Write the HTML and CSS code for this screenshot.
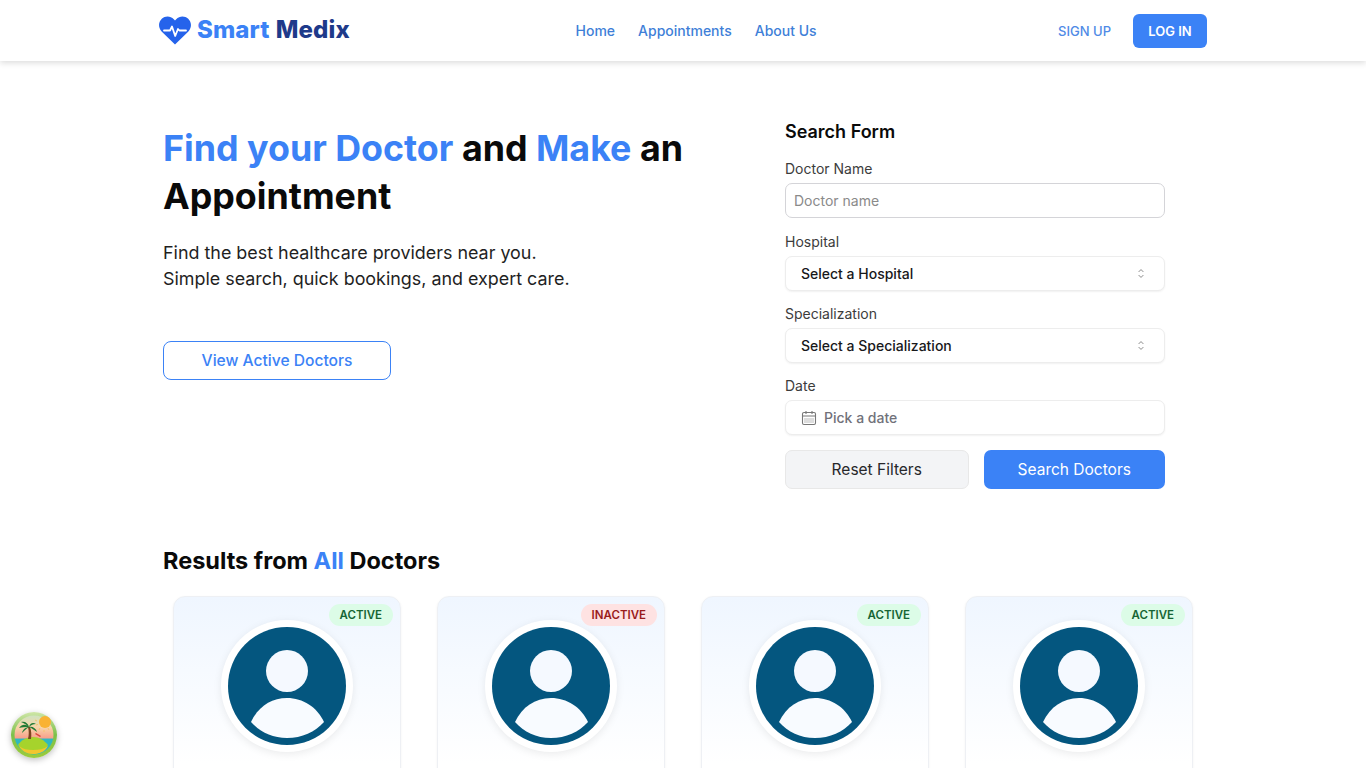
FILE: index.html
```html
<!DOCTYPE html>
<html lang="en">
<head>
  <meta charset="UTF-8" />
  <meta name="viewport" content="width=device-width, initial-scale=1" />
  <title>Smart Medix</title>
  <link rel="stylesheet" href="styles.css">
</head>
<body>
  <header class="topbar">
    <div class="topbar-inner">
      <a class="logo" href="#">
        <svg class="logo-icon" viewBox="0 0 32 29" width="32" height="29">
          <path d="M16 28.5 2.6 15.4C-.9 11.8-.8 6 2.8 2.7 6.3-.5 11.6-.2 14.8 3.2L16 4.6l1.2-1.4c3.2-3.4 8.5-3.7 12-.5 3.6 3.3 3.7 9.1.2 12.7z" fill="#2563eb"/>
          <path d="M5 14.5h6l2-4 3.2 9.5 2.8-7 1.4 1.5H27" fill="none" stroke="#fff" stroke-width="1.8" stroke-linejoin="round" stroke-linecap="round"/>
        </svg>
        <span class="logo-text"><span class="blue">Smart</span> <span class="navy">Medix</span></span>
      </a>
      <nav class="main-nav">
        <a href="#">Home</a>
        <a href="#">Appointments</a>
        <a href="#">About Us</a>
      </nav>
      <div class="auth">
        <a class="signup" href="#">SIGN UP</a>
        <a class="login" href="#">LOG IN</a>
      </div>
    </div>
  </header>

  <main class="page">
    <section class="hero">
      <div class="hero-copy">
        <h1><span class="blue">Find your Doctor</span> <span>and</span> <span class="blue">Make</span> <span>an</span><br><span>Appointment</span></h1>
        <p>Find the best healthcare providers near you.<br>Simple search, quick bookings, and expert care.</p>
        <a class="outline-btn" href="#">View Active Doctors</a>
      </div>

      <form class="search-form">
        <h2>Search Form</h2>
        <label class="field-label" for="doctorName">Doctor Name</label>
        <input class="text-input" id="doctorName" type="text" placeholder="Doctor name">

        <label class="field-label">Hospital</label>
        <div class="select-box">
          <span>Select a Hospital</span>
          <svg viewBox="0 0 10 14" width="8" height="11"><path d="M2 5l3-3 3 3M2 9l3 3 3-3" fill="none" stroke="#777" stroke-width="1.1"/></svg>
        </div>

        <label class="field-label">Specialization</label>
        <div class="select-box">
          <span>Select a Specialization</span>
          <svg viewBox="0 0 10 14" width="8" height="11"><path d="M2 5l3-3 3 3M2 9l3 3 3-3" fill="none" stroke="#777" stroke-width="1.1"/></svg>
        </div>

        <label class="field-label">Date</label>
        <div class="date-box">
          <svg viewBox="0 0 16 16" width="16" height="16">
            <rect x="1.5" y="2.5" width="13" height="12" rx="1.5" fill="none" stroke="#777" stroke-width="1.1"/>
            <path d="M1.5 6h13M5 1v3M11 1v3" fill="none" stroke="#777" stroke-width="1.1"/>
            <path d="M3 8h10v5H3z" fill="#ddd"/>
          </svg>
          <span>Pick a date</span>
        </div>

        <div class="form-actions">
          <button class="reset-btn" type="button">Reset Filters</button>
          <button class="search-btn" type="button">Search Doctors</button>
        </div>
      </form>
    </section>

    <section class="results">
      <h2>Results from <span class="blue">All</span> Doctors</h2>
      <div class="doctor-grid">
        <article class="doctor-card">
          <span class="badge active">ACTIVE</span>
          <div class="avatar"><svg viewBox="0 0 118 118"><use href="#person"/></svg></div>
        </article>
        <article class="doctor-card">
          <span class="badge inactive">INACTIVE</span>
          <div class="avatar"><svg viewBox="0 0 118 118"><use href="#person"/></svg></div>
        </article>
        <article class="doctor-card">
          <span class="badge active">ACTIVE</span>
          <div class="avatar"><svg viewBox="0 0 118 118"><use href="#person"/></svg></div>
        </article>
        <article class="doctor-card">
          <span class="badge active">ACTIVE</span>
          <div class="avatar"><svg viewBox="0 0 118 118"><use href="#person"/></svg></div>
        </article>
      </div>
    </section>
  </main>

  <svg class="sprite" width="0" height="0">
    <symbol id="person" viewBox="0 0 118 118">
      <circle cx="59" cy="59" r="59" fill="#04567f"/>
      <circle cx="59" cy="44" r="21" fill="#f5f9ff"/>
      <path d="M23 95C30 80 43 71 59 71s30 9 37 24c-9 10-22 16-37 16s-27-6-36-16z" fill="#f8fbff"/>
    </symbol>
  </svg>

  <button class="theme-fab" type="button" aria-label="Theme">
    <svg viewBox="0 0 46 46" width="46" height="46">
      <defs>
        <linearGradient id="ring" x1="0" y1="0" x2="0" y2="1">
          <stop offset="0" stop-color="#cfe6a8"/>
          <stop offset="0.5" stop-color="#7cc04a"/>
          <stop offset="1" stop-color="#9ccc3c"/>
        </linearGradient>
        <linearGradient id="sky" x1="0" y1="0" x2="0" y2="1">
          <stop offset="0" stop-color="#cfe3c0"/>
          <stop offset="0.3" stop-color="#f8d5a8"/>
          <stop offset="0.58" stop-color="#f7a08c"/>
          <stop offset="0.6" stop-color="#2fb8c0"/>
          <stop offset="1" stop-color="#2fb8c0"/>
        </linearGradient>
      </defs>
      <circle cx="23" cy="23" r="23" fill="url(#ring)"/>
      <circle cx="23" cy="23" r="19.5" fill="url(#sky)"/>
      <circle cx="34" cy="10" r="6" fill="#f9b233"/>
      <path d="M24 8l2 1M25 13l2-.5M28 18l1-2M33 20v-2M38 18l-1-2" stroke="#f3c46b" stroke-width="1"/>
      <path d="M7 33c3-5 9-8 15-8s11 3 15 8c-3 6-9 9-15 9S10 39 7 33z" fill="#a6d32c"/>
      <path d="M8 34c3 5 8 8 14 8s12-2 15-8c-4 3-9 4-15 4s-10-1-14-4z" fill="#f2c62e"/>
      <path d="M25 21l5 3-1 1-5-3z" fill="#d9453a"/>
      <path d="M17 27c1-4 1-8 0-12h2c1.5 4 1.5 8 1 12z" fill="#7c4520"/>
      <path d="M18 15c-3-3-7-3-10 1 3-1 6-1 10-1zM18 15c-1-4-4-6-8-5 3 1 6 3 8 5zM18 15c1-4 4-5 7-3-3 0-5 1-7 3zM18 15c3-1 7 1 8 5-3-2-5-4-8-5zM18 15c-3 0-6 2-7 6 2-2 4-4 7-6z" fill="#1f7a35"/>
    </svg>
  </button>
</body>
</html>
```

FILE: styles.css
```css
* {
  box-sizing: border-box;
}

body {
  margin: 0;
  font-family: Inter, "Open Sans", sans-serif;
  background: #fff;
  color: #0a0a0a;
}

a {
  text-decoration: none;
}

.blue {
  color: #3b82f6;
}

.navy {
  color: #1e3a8a;
}

.topbar {
  height: 61px;
  background: #fff;
  box-shadow: 0 2px 6px rgba(0, 0, 0, 0.14);
}

.topbar-inner {
  width: 1048px;
  height: 100%;
  margin-left: 159px;
  display: flex;
  align-items: center;
  justify-content: space-between;
}

.logo {
  display: flex;
  align-items: center;
  gap: 6px;
  width: 192px;
}

.logo-text {
  font-size: 24px;
  font-weight: 800;
  line-height: 28px;
  margin-top: -1px;
  letter-spacing: 0.1px;
  word-spacing: 1px;
  white-space: nowrap;
}

.main-nav {
  display: flex;
  gap: 23px;
  margin-right: 17px;
}

.main-nav a {
  color: #3f7fd8;
  font-size: 14px;
  font-weight: 500;
}

.auth {
  display: flex;
  align-items: center;
  gap: 22px;
}

.signup {
  color: #4f8ae6;
  font-size: 13px;
  font-weight: 500;
}

.login {
  width: 74px;
  height: 34px;
  display: flex;
  align-items: center;
  justify-content: center;
  background: #3b82f6;
  color: #fff;
  border-radius: 6px;
  font-size: 13px;
  font-weight: 600;
}

.page {
  padding: 60px 0 0 163px;
}

.hero {
  display: flex;
}

.hero-copy {
  width: 622px;
  padding-top: 3px;
}

.hero-copy h1 {
  margin: 0;
  font-size: 35.8px;
  font-weight: 700;
  line-height: 48px;
}

.hero-copy p {
  margin: 20px 0 0;
  font-size: 17.9px;
  line-height: 26px;
  color: #1f1f1f;
}

.outline-btn {
  margin-top: 49px;
  width: 228px;
  height: 39px;
  display: flex;
  align-items: center;
  justify-content: center;
  border: 1px solid #3b82f6;
  border-radius: 8px;
  color: #3b82f6;
  font-size: 15.6px;
  font-weight: 500;
}

.search-form {
  width: 380px;
}

.search-form h2 {
  margin: 0 0 17px;
  font-size: 18px;
  line-height: 22px;
  font-weight: 600;
}

.field-label {
  display: block;
  margin-bottom: 5px;
  font-size: 14px;
  line-height: 18px;
  color: #3c3c3c;
}

.text-input,
.select-box,
.date-box {
  width: 100%;
  height: 35px;
  margin-bottom: 14px;
  border-radius: 7px;
  background: #fff;
  font-family: inherit;
  font-size: 14px;
}

.text-input {
  display: block;
  border: 1px solid #d4d4d8;
  padding: 0 8px;
  margin-bottom: 15px;
}

.text-input::placeholder {
  color: #8a8a8a;
}

.select-box,
.date-box {
  display: flex;
  align-items: center;
  border: 1px solid #ededed;
  box-shadow: 0 1px 2px rgba(0, 0, 0, 0.06);
}

.select-box {
  justify-content: space-between;
  padding: 0 19px 0 15px;
  font-weight: 500;
  color: #18181b;
}

.date-box {
  gap: 7px;
  padding: 0 15px;
  margin-bottom: 15px;
  color: #71717a;
  font-weight: 500;
}

.form-actions {
  display: flex;
  gap: 15px;
}

.form-actions button {
  flex: 1;
  height: 39px;
  border-radius: 7px;
  font-family: inherit;
  font-size: 15.5px;
}

.reset-btn {
  background: #f3f4f6;
  border: 1px solid #e8e8e8;
  color: #27272a;
}

.search-btn {
  background: #3b82f6;
  border: 0;
  color: #fff;
}

.results {
  margin-top: 57px;
}

.results h2 {
  margin: 0;
  font-size: 23.5px;
  line-height: 30px;
  font-weight: 700;
}

.doctor-grid {
  display: flex;
  gap: 36px;
  margin: 20px 0 0 10px;
}

.doctor-card {
  position: relative;
  flex: none;
  width: 228px;
  height: 280px;
  padding-top: 23px;
  border: 1px solid #eef0f4;
  border-radius: 12px;
  background: linear-gradient(#eff6ff, #fff 60%);
  box-shadow: 0 1px 3px rgba(0, 0, 0, 0.05);
}

.badge {
  position: absolute;
  top: 7px;
  right: 7px;
  padding: 0 11px;
  height: 22px;
  display: flex;
  align-items: center;
  border-radius: 11px;
  font-size: 11.5px;
  font-weight: 600;
}

.badge.active {
  background: #dcfce7;
  color: #166534;
}

.badge.inactive {
  background: #fee2e2;
  color: #991b1b;
}

.avatar {
  width: 132px;
  height: 132px;
  margin: 0 auto;
  padding: 7px;
  border-radius: 50%;
  background: #fff;
  box-shadow: 0 2px 8px rgba(0, 0, 0, 0.08);
}

.avatar svg {
  display: block;
  width: 100%;
  height: 100%;
}

.sprite {
  position: absolute;
}

.theme-fab {
  position: fixed;
  left: 11px;
  bottom: 10px;
  width: 46px;
  height: 46px;
  padding: 0;
  border: 0;
  border-radius: 50%;
  background: none;
  box-shadow: 0 2px 6px rgba(0, 0, 0, 0.25);
}

.theme-fab svg {
  display: block;
}
```
